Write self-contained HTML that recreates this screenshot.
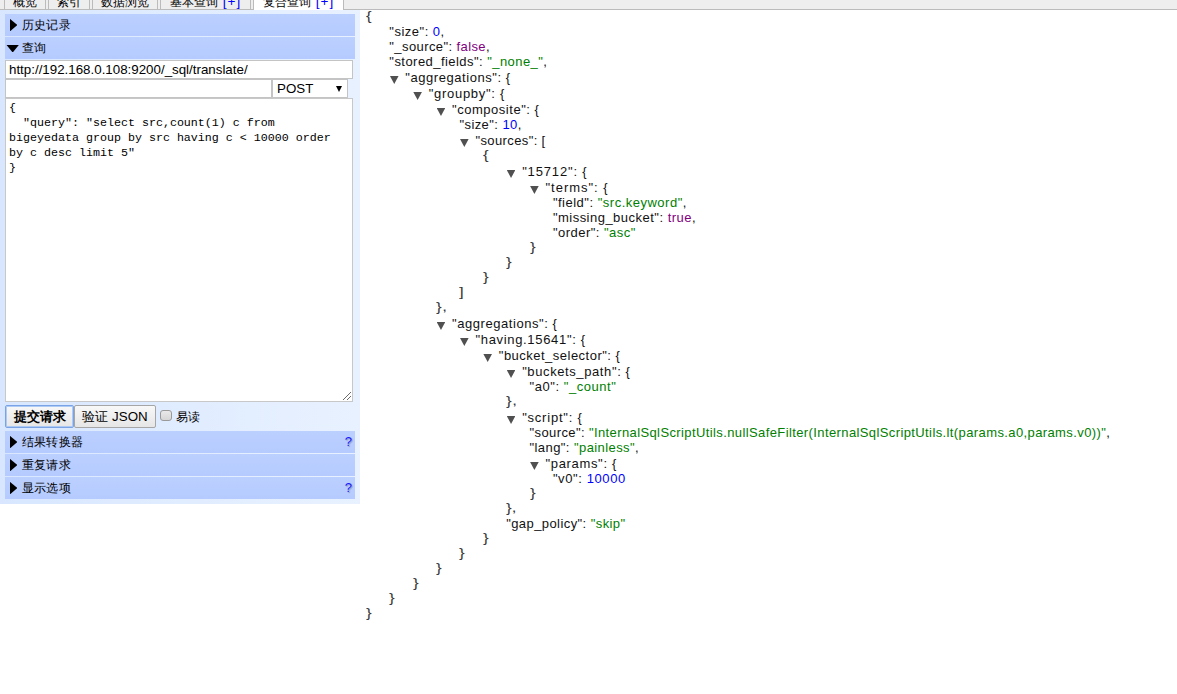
<!DOCTYPE html>
<html lang="zh">
<head>
<meta charset="utf-8">
<title>elasticsearch-head</title>
<style>
html,body{margin:0;padding:0;}
body{width:1177px;height:694px;overflow:hidden;background:#fff;position:relative;font-family:"Liberation Sans",sans-serif;font-size:12px;color:#000;}
#hdr{position:absolute;left:0;top:0;width:1177px;height:9px;background:#eee;border-bottom:1px solid #bbb;z-index:5;}
.tab{position:absolute;top:-13px;height:22px;box-sizing:border-box;border:1px solid #bbb;border-bottom:none;font-size:12px;line-height:14px;padding-top:7px;text-align:center;white-space:nowrap;color:#000;}
.tab.act{background:#fff;height:23px;}
.tab .nw{color:#00f;margin-left:5px;font-size:13.5px;letter-spacing:1px;}
#side{position:absolute;left:0;top:9px;width:360px;height:495px;background:linear-gradient(to right,#d8e7ff,#e8f1ff);}
.sh{position:absolute;left:5px;width:350px;height:22px;background:linear-gradient(to bottom,#bcd0ff,#b5cbff);font-size:12px;line-height:22px;}
.sh .ar{position:absolute;left:4.8px;top:4.8px;width:7.6px;height:12.6px;background:#000;clip-path:polygon(0 0,100% 50%,0 100%);}
.sh .ad{position:absolute;left:1.4px;top:7.8px;width:12.6px;height:7.6px;background:#000;clip-path:polygon(0 0,100% 0,50% 100%);}
.sh .lb{position:absolute;left:16.5px;top:0;letter-spacing:0.45px;}
.sh .hp{position:absolute;right:3px;top:0;color:#1a1aff;font-size:13px;text-shadow:1px 1px 1px #8d93b8;}
.inp{position:absolute;box-sizing:border-box;background:#fff;border:1px solid #c4c4c4;font-size:13.33px;line-height:16px;padding:0 0 0 3px;white-space:nowrap;overflow:hidden;}
#ta{position:absolute;left:5px;top:89px;width:348px;height:304px;box-sizing:border-box;background:#fff;border:1px solid #c8c8c8;font-family:"Liberation Mono",monospace;font-size:11.67px;line-height:15px;padding:2px 0 0 3px;white-space:pre;color:#000;}
.btn{position:absolute;top:396px;height:23px;box-sizing:border-box;border:1px solid #a6a6a6;border-radius:2px;background:linear-gradient(#f8f8f8,#e6e6e6);font-size:13.33px;line-height:21px;text-align:center;white-space:nowrap;}
#json{position:absolute;left:366px;top:9px;width:812px;font-size:13px;color:#111;}
.ln{height:15px;line-height:15px;position:relative;white-space:pre;}
.ln.t{height:16px;line-height:16px;}
.tg{position:absolute;margin-left:0.6px;top:7px;width:8.6px;height:8px;background:#505050;clip-path:polygon(0 0,100% 0,50% 100%);}
.ln.br .tx{position:relative;top:-1px;display:inline-block;transform:scaleX(1.3);transform-origin:0 50%;color:#383838;}
.ln.t .tx{margin-left:16px;position:relative;top:1px;}
#selar{position:absolute;left:63px;top:6px;width:0;height:0;border-top:6px solid #000;border-left:3px solid transparent;border-right:3px solid transparent;}
#cb{position:absolute;left:160px;top:401px;width:12px;height:11px;box-sizing:border-box;border:1px solid #9a9a9a;border-radius:3px;background:linear-gradient(#e9e9e9,#d6d6d6);}
#cbl{position:absolute;left:176px;top:400px;font-size:12px;line-height:16px;}
#grip{position:absolute;left:343px;top:383px;}
.s{color:#008000;}.n{color:#00f;}.b{color:#800080;}
</style>
</head>
<body>
<div id="hdr">
  <div class="tab" style="left:4px;width:42px;">概览</div>
  <div class="tab" style="left:48px;width:42px;">索引</div>
  <div class="tab" style="left:92px;width:66px;">数据浏览</div>
  <div class="tab" style="left:160px;width:91px;">基本查询<span class="nw">[+]</span></div>
  <div class="tab act" style="left:253px;width:91px;">复合查询<span class="nw">[+]</span></div>
</div>
<div id="side">
  <div class="sh" style="top:5px;"><i class="ar"></i><span class="lb">历史记录</span></div>
  <div class="sh" style="top:28px;"><i class="ad"></i><span class="lb">查询</span></div>
  <div class="inp" style="left:5px;top:51px;width:348px;height:19px;padding-top:1px;">http://192.168.0.108:9200/_sql/translate/</div>
  <div class="inp" style="left:5px;top:70px;width:267px;height:19px;"></div>
  <div class="inp" id="sel" style="left:272px;top:70px;width:76px;height:19px;padding-left:4px;padding-top:1px;">POST<span id="selar"></span></div>
  <div id="ta">{
  "query": "select src,count(1) c from
bigeyedata group by src having c &lt; 10000 order
by c desc limit 5"
}</div>
  <svg id="grip" width="8" height="8" viewBox="0 0 8 8" shape-rendering="crispEdges"><rect x="0" y="7" width="1" height="1" fill="#6b6b6b"/><rect x="1" y="6" width="1" height="1" fill="#6b6b6b"/><rect x="2" y="5" width="1" height="1" fill="#6b6b6b"/><rect x="3" y="4" width="1" height="1" fill="#6b6b6b"/><rect x="4" y="3" width="1" height="1" fill="#6b6b6b"/><rect x="5" y="2" width="1" height="1" fill="#6b6b6b"/><rect x="6" y="1" width="1" height="1" fill="#6b6b6b"/><rect x="7" y="0" width="1" height="1" fill="#6b6b6b"/><rect x="4" y="7" width="1" height="1" fill="#6b6b6b"/><rect x="5" y="6" width="1" height="1" fill="#6b6b6b"/><rect x="6" y="5" width="1" height="1" fill="#6b6b6b"/><rect x="7" y="4" width="1" height="1" fill="#6b6b6b"/></svg>
  <div class="btn" style="left:5px;width:69px;font-weight:bold;border-color:#7aa3e6;box-shadow:inset 0 0 0 1px rgba(160,195,245,0.85);">提交请求</div>
  <div class="btn" style="left:74px;width:82px;">验证 JSON</div>
  <div id="cb"></div>
  <div id="cbl">易读</div>
  <div class="sh" style="top:422px;"><i class="ar"></i><span class="lb">结果转换器</span><span class="hp">?</span></div>
  <div class="sh" style="top:445px;"><i class="ar"></i><span class="lb">重复请求</span></div>
  <div class="sh" style="top:468px;"><i class="ar"></i><span class="lb">显示选项</span><span class="hp">?</span></div>
</div>
<div id="json">
<div class="ln br" id="l0" style="padding-left:0.00px;"><span class="tx"><span class="p">{</span></span></div>
<div class="ln" id="l1" style="padding-left:23.36px;letter-spacing:0.489px;"><span class="tx"><span class="k">"size"</span><span class="p">: </span><span class="n">0</span><span class="p">,</span></span></div>
<div class="ln" id="l2" style="padding-left:23.36px;letter-spacing:0.400px;"><span class="tx"><span class="k">"_source"</span><span class="p">: </span><span class="b">false</span><span class="p">,</span></span></div>
<div class="ln" id="l3" style="padding-left:23.36px;letter-spacing:0.448px;"><span class="tx"><span class="k">"stored_fields"</span><span class="p">: </span><span class="s">"_none_"</span><span class="p">,</span></span></div>
<div class="ln t" id="l4" style="padding-left:23.36px;letter-spacing:0.550px;"><i class="tg"></i><span class="tx"><span class="k">"aggregations"</span><span class="p">: {</span></span></div>
<div class="ln t" id="l5" style="padding-left:46.72px;letter-spacing:0.709px;"><i class="tg"></i><span class="tx"><span class="k">"groupby"</span><span class="p">: {</span></span></div>
<div class="ln t" id="l6" style="padding-left:70.08px;letter-spacing:0.523px;"><i class="tg"></i><span class="tx"><span class="k">"composite"</span><span class="p">: {</span></span></div>
<div class="ln" id="l7" style="padding-left:93.44px;letter-spacing:0.420px;"><span class="tx"><span class="k">"size"</span><span class="p">: </span><span class="n">10</span><span class="p">,</span></span></div>
<div class="ln t" id="l8" style="padding-left:93.44px;letter-spacing:0.382px;"><i class="tg"></i><span class="tx"><span class="k">"sources"</span><span class="p">: [</span></span></div>
<div class="ln br" id="l9" style="padding-left:116.80px;"><span class="tx"><span class="p">{</span></span></div>
<div class="ln t" id="l10" style="padding-left:140.16px;letter-spacing:0.844px;"><i class="tg"></i><span class="tx"><span class="k">"15712"</span><span class="p">: {</span></span></div>
<div class="ln t" id="l11" style="padding-left:163.52px;letter-spacing:0.978px;"><i class="tg"></i><span class="tx"><span class="k">"terms"</span><span class="p">: {</span></span></div>
<div class="ln" id="l12" style="padding-left:186.88px;letter-spacing:0.500px;"><span class="tx"><span class="k">"field"</span><span class="p">: </span><span class="s">"src.keyword"</span><span class="p">,</span></span></div>
<div class="ln" id="l13" style="padding-left:186.88px;letter-spacing:0.482px;"><span class="tx"><span class="k">"missing_bucket"</span><span class="p">: </span><span class="b">true</span><span class="p">,</span></span></div>
<div class="ln" id="l14" style="padding-left:186.88px;letter-spacing:0.477px;"><span class="tx"><span class="k">"order"</span><span class="p">: </span><span class="s">"asc"</span></span></div>
<div class="ln br" id="l15" style="padding-left:163.52px;"><span class="tx"><span class="p">}</span></span></div>
<div class="ln br" id="l16" style="padding-left:140.16px;"><span class="tx"><span class="p">}</span></span></div>
<div class="ln br" id="l17" style="padding-left:116.80px;"><span class="tx"><span class="p">}</span></span></div>
<div class="ln br" id="l18" style="padding-left:93.44px;"><span class="tx"><span class="p">]</span></span></div>
<div class="ln br" id="l19" style="padding-left:70.08px;letter-spacing:0.400px;"><span class="tx"><span class="p">},</span></span></div>
<div class="ln t" id="l20" style="padding-left:70.08px;letter-spacing:0.550px;"><i class="tg"></i><span class="tx"><span class="k">"aggregations"</span><span class="p">: {</span></span></div>
<div class="ln t" id="l21" style="padding-left:93.44px;letter-spacing:0.675px;"><i class="tg"></i><span class="tx"><span class="k">"having.15641"</span><span class="p">: {</span></span></div>
<div class="ln t" id="l22" style="padding-left:116.80px;letter-spacing:0.484px;"><i class="tg"></i><span class="tx"><span class="k">"bucket_selector"</span><span class="p">: {</span></span></div>
<div class="ln t" id="l23" style="padding-left:140.16px;letter-spacing:0.600px;"><i class="tg"></i><span class="tx"><span class="k">"buckets_path"</span><span class="p">: {</span></span></div>
<div class="ln" id="l24" style="padding-left:163.52px;letter-spacing:0.554px;"><span class="tx"><span class="k">"a0"</span><span class="p">: </span><span class="s">"_count"</span></span></div>
<div class="ln br" id="l25" style="padding-left:140.16px;letter-spacing:0.400px;"><span class="tx"><span class="p">},</span></span></div>
<div class="ln t" id="l26" style="padding-left:140.16px;letter-spacing:0.780px;"><i class="tg"></i><span class="tx"><span class="k">"script"</span><span class="p">: {</span></span></div>
<div class="ln" id="l27" style="padding-left:163.52px;letter-spacing:0.392px;"><span class="tx"><span class="k">"source"</span><span class="p">: </span><span class="s">"InternalSqlScriptUtils.nullSafeFilter(InternalSqlScriptUtils.lt(params.a0,params.v0))"</span><span class="p">,</span></span></div>
<div class="ln" id="l28" style="padding-left:163.52px;letter-spacing:0.422px;"><span class="tx"><span class="k">"lang"</span><span class="p">: </span><span class="s">"painless"</span><span class="p">,</span></span></div>
<div class="ln t" id="l29" style="padding-left:163.52px;letter-spacing:0.660px;"><i class="tg"></i><span class="tx"><span class="k">"params"</span><span class="p">: {</span></span></div>
<div class="ln" id="l30" style="padding-left:186.88px;letter-spacing:0.600px;"><span class="tx"><span class="k">"v0"</span><span class="p">: </span><span class="n">10000</span></span></div>
<div class="ln br" id="l31" style="padding-left:163.52px;"><span class="tx"><span class="p">}</span></span></div>
<div class="ln br" id="l32" style="padding-left:140.16px;"><span class="tx"><span class="p">},</span></span></div>
<div class="ln" id="l33" style="padding-left:140.16px;letter-spacing:0.421px;"><span class="tx"><span class="k">"gap_policy"</span><span class="p">: </span><span class="s">"skip"</span></span></div>
<div class="ln br" id="l34" style="padding-left:116.80px;"><span class="tx"><span class="p">}</span></span></div>
<div class="ln br" id="l35" style="padding-left:93.44px;"><span class="tx"><span class="p">}</span></span></div>
<div class="ln br" id="l36" style="padding-left:70.08px;"><span class="tx"><span class="p">}</span></span></div>
<div class="ln br" id="l37" style="padding-left:46.72px;"><span class="tx"><span class="p">}</span></span></div>
<div class="ln br" id="l38" style="padding-left:23.36px;"><span class="tx"><span class="p">}</span></span></div>
<div class="ln br" id="l39" style="padding-left:0.00px;"><span class="tx"><span class="p">}</span></span></div>
</div>
</body>
</html>
